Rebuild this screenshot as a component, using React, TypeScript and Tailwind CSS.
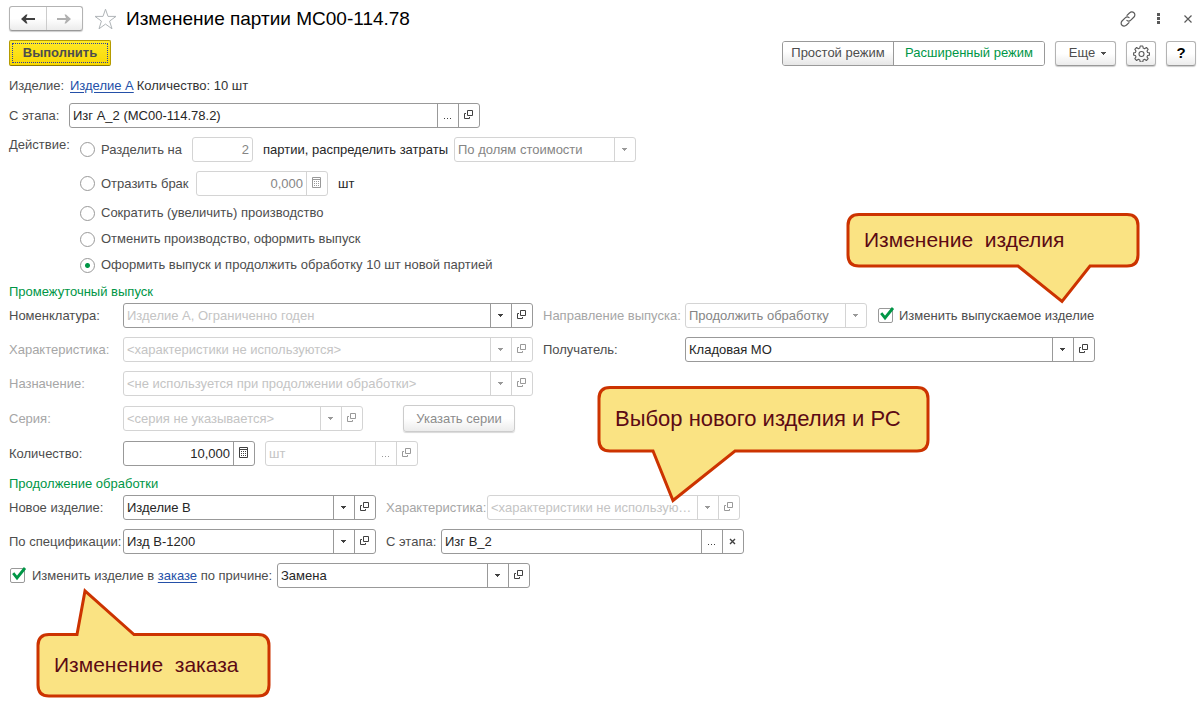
import { useState } from 'react';
import type { ReactNode } from 'react';
import clsx from 'clsx';

type IconName = 'arrow' | 'open' | 'calc' | 'dots' | 'clear';

const iconLabels: Record<IconName, string> = {
  arrow: 'Выбрать из списка',
  open: 'Открыть',
  calc: 'Калькулятор',
  dots: 'Выбрать',
  clear: 'Очистить',
};

function FieldIcon({ name }: { name: IconName }) {
  if (name === 'arrow') {
    return (
      <svg width="5" height="3" viewBox="0 0 5 3" fill="currentColor" shapeRendering="crispEdges">
        <path d="M0 0h5v1H0zM1 1h3v1H1zM2 2h1v1H2z" />
      </svg>
    );
  }
  if (name === 'open') {
    return (
      <svg width="9" height="11" viewBox="0 0 9 11" fill="none" stroke="currentColor">
        <path d="M3.5 .5h5v5h-5zM2 3.5H.5v5h5V7" />
      </svg>
    );
  }
  if (name === 'calc') {
    return (
      <svg width="9" height="13" viewBox="0 0 9 13" fill="none" stroke="currentColor">
        <path d="M.5 .5h8v10h-8zM.5 2.5h8" />
        <path d="M2 4.5h5M2 6.5h5M2 8.5h5" strokeDasharray="1 1" />
      </svg>
    );
  }
  if (name === 'dots') {
    return (
      <svg width="7" height="9" viewBox="0 0 7 9" fill="currentColor" shapeRendering="crispEdges">
        <path d="M0 7h1v1H0zM3 7h1v1H3zM6 7h1v1H6z" />
      </svg>
    );
  }
  return (
    <svg width="7" height="8" viewBox="0 0 7 8" fill="none" stroke="currentColor" strokeWidth="1.4">
      <path d="M1 1l5 5M6 1L1 6" />
    </svg>
  );
}

interface FieldProps {
  id: string;
  width: string;
  value?: string;
  placeholder?: string;
  icons?: IconName[];
  disabled?: boolean;
  right?: boolean;
  label?: string;
}

function Field({ id, width, value, placeholder, icons = [], disabled, right, label }: FieldProps) {
  const border = disabled ? 'border-[#d4d4d4]' : 'border-[#999999]';
  return (
    <div className={clsx('flex h-[25px] min-w-0 overflow-hidden rounded-[3px] border bg-white', border, width)}>
      <input
        id={id}
        type="text"
        aria-label={label}
        defaultValue={value}
        placeholder={placeholder}
        disabled={disabled}
        className={clsx(
          'h-full min-w-0 flex-1 px-[3px] text-ellipsis outline-none placeholder:text-[#c4c4c4]',
          right && 'text-right',
          disabled ? 'text-[#858585]' : 'text-[#262626]'
        )}
      />
      {icons.map((name) => (
        <button
          key={name}
          type="button"
          aria-label={iconLabels[name]}
          disabled={disabled}
          className={clsx(
            'flex w-[21px] shrink-0 items-center justify-center border-l pr-px',
            border,
            disabled ? 'text-[#999999]' : 'text-[#404040]'
          )}
        >
          <FieldIcon name={name} />
        </button>
      ))}
    </div>
  );
}

function DisabledSelect({ id, option, label }: { id: string; option: string; label?: string }) {
  return (
    <div className="relative flex h-[25px] w-[182px] min-w-0 rounded-[3px] border border-[#d4d4d4]">
      <select
        id={id}
        aria-label={label}
        disabled
        className="h-full w-full appearance-none px-[3px] text-[#858585] opacity-100"
      >
        <option>{option}</option>
      </select>
      <span className="pointer-events-none absolute inset-y-0 right-0 flex w-[21px] items-center justify-center border-l border-[#d4d4d4] pr-px text-[#999999]">
        <FieldIcon name="arrow" />
      </span>
    </div>
  );
}

function Label({ htmlFor, width, muted, children }: { htmlFor: string; width?: string; muted?: boolean; children: ReactNode }) {
  return (
    <label
      htmlFor={htmlFor}
      className={clsx('shrink-0 whitespace-nowrap', width, muted ? 'text-[#a6a6a6]' : 'text-[#4d4d4d]')}
    >
      {children}
    </label>
  );
}

function CheckBox({ id, label }: { id: string; label?: string }) {
  const [checked, setChecked] = useState(true);
  return (
    <span className="relative size-[15px] shrink-0">
      <input
        id={id}
        type="checkbox"
        aria-label={label}
        checked={checked}
        onChange={(e) => setChecked(e.target.checked)}
        className="block size-[15px] appearance-none rounded-[2px] border border-[#999999] bg-white"
      />
      {checked && (
        <svg
          className="pointer-events-none absolute top-[-1px] left-0"
          width="17"
          height="16"
          viewBox="0 0 17 16"
          fill="none"
          stroke="#009646"
          strokeWidth="2.8"
        >
          <path d="M3.2 6.2L7 10.900L15 1" />
        </svg>
      )}
    </span>
  );
}

const actions = [
  { id: 'split', text: 'Разделить на', width: 'w-[102px]' },
  { id: 'defect', text: 'Отразить брак', width: 'w-[106px]' },
  { id: 'resize', text: 'Сократить (увеличить) производство' },
  { id: 'cancel', text: 'Отменить производство, оформить выпуск' },
  { id: 'continue', text: 'Оформить выпуск и продолжить обработку 10 шт новой партией' },
];

function Callout({ className, width, height, path, textClass, children }: {
  className: string;
  width: number;
  height: number;
  path: string;
  textClass: string;
  children: string;
}) {
  return (
    <div className={clsx('pointer-events-none absolute', className)}>
      <svg width={width} height={height} viewBox={`0 0 ${width} ${height}`} fill="#fae383" stroke="#cc3300" strokeWidth="3">
        <path d={path} />
      </svg>
      <p className={clsx('absolute left-[18px] whitespace-pre leading-7 text-[#5c0a14]', textClass)}>
        {children}
      </p>
    </div>
  );
}

const raised = 'border border-[#b3b3b3] border-b-[#999999] bg-linear-to-b from-white from-50% to-[#ececec] rounded-[3px] shadow-[0_1px_1px_#cccccc]';

export default function App() {
  const [action, setAction] = useState('continue');
  const [mode, setMode] = useState('extended');

  const radio = (index: number) => {
    const { id, text, width } = actions[index];
    return (
      <label className={clsx('flex shrink-0 items-center gap-[6px] whitespace-nowrap', width)}>
        <input
          type="radio"
          name="action"
          checked={action === id}
          onChange={() => setAction(id)}
          className="size-[15px] shrink-0 appearance-none rounded-full border border-[#999999] bg-white checked:bg-[radial-gradient(circle,#009646_2px,transparent_3px)]"
        />
        {text}
      </label>
    );
  };

  return (
    <div className="relative min-h-screen bg-white px-[9px] pt-[6px] pb-[117px] font-['Liberation_Sans',Arial,sans-serif] text-[13px] leading-4 text-[#4d4d4d]">
      <header className="flex h-[25px] items-center">
        <div className={clsx('flex h-[25px] w-[74px] shrink-0', raised)}>
          <button type="button" aria-label="Назад" className="flex flex-1 items-center justify-center border-r border-[#cccccc] text-[#404040]">
            <svg width="14" height="10" viewBox="0 0 14 10" fill="currentColor">
              <path d="M0 5L5 .5h1.500L5 4h9v2H5l1.500 3.500H5z" />
            </svg>
          </button>
          <button type="button" aria-label="Вперед" className="flex flex-1 items-center justify-center text-[#b0b0b0]">
            <svg width="14" height="10" viewBox="0 0 14 10" fill="currentColor">
              <path d="M14 5L9 .5H7.500L9 4H0v2h9L7.500 9.500H9z" />
            </svg>
          </button>
        </div>
        <button type="button" aria-label="В избранное" className="ml-[11px] text-[#b0b5b8]">
          <svg width="23" height="22" viewBox="0 0 23 22" fill="none" stroke="currentColor">
            <path d="M11.5 1.2L14 8.4h8l-6.400 4.700 2.400 7.700-6.500-4.700L5 20.800l2.400-7.700L1 8.400h8z" />
          </svg>
        </button>
        <h1 className="ml-[9px] min-w-0 flex-1 truncate text-[19px] leading-6 text-black">Изменение партии МС00-114.78</h1>
        <div className="flex shrink-0 text-[#595959]">
          <button type="button" aria-label="Получить ссылку" className="flex w-[30px] justify-center">
            <svg width="16" height="16" viewBox="0 0 16 16" fill="none" stroke="currentColor" strokeWidth="1.2" strokeLinecap="round">
              <path d="M7 4.400L9.700 1.800a2.900 2.900 0 0 1 4.300 4.200L10.800 9.200a2.900 2.900 0 0 1-3.900.2" />
              <path d="M9 11.600L6.300 14.200A2.900 2.900 0 0 1 2 10L5.200 6.800a2.900 2.900 0 0 1 3.900-.2" />
            </svg>
          </button>
          <button type="button" aria-label="Меню" className="flex w-[30px] items-center justify-center">
            <svg width="3" height="11" viewBox="0 0 3 11" fill="currentColor">
              <path d="M0 0h3v3H0zM0 4h3v3H0zM0 8h3v3H0z" />
            </svg>
          </button>
          <button type="button" aria-label="Закрыть" className="-mr-[10px] flex w-[30px] items-center justify-center">
            <svg width="8" height="8" viewBox="0 0 8 8" fill="none" stroke="currentColor" strokeWidth="1.2">
              <path d="M.5 .5l7 7M7.500 .5l-7 7" />
            </svg>
          </button>
        </div>
      </header>

      <div className="mt-[9px] -mr-[3px] flex items-center justify-between gap-4">
        <button
          type="button"
          className="h-[26px] w-[102px] shrink-0 rounded-[2px] border border-[#b59b00] border-b-[#8f7b00] bg-linear-to-b from-[#ffe924] to-[#f9d800] p-[2px] font-bold"
        >
          <span className="flex h-full items-center justify-center border border-dotted border-[#2b3fa0]">Выполнить</span>
        </button>
        <div className="flex gap-[10px]">
          <div className="flex h-[25px] overflow-hidden rounded-[3px] border border-[#999999]">
            <button
              type="button"
              aria-pressed={mode === 'simple'}
              onClick={() => setMode('simple')}
              className={clsx('w-[110px]', mode === 'simple' ? 'bg-white text-[#009646]' : 'bg-linear-to-b from-white from-40% to-[#e6e6e6]')}
            >
              Простой режим
            </button>
            <button
              type="button"
              aria-pressed={mode === 'extended'}
              onClick={() => setMode('extended')}
              className={clsx('w-[151px] border-l border-[#999999]', mode === 'extended' ? 'bg-white text-[#009646]' : 'bg-linear-to-b from-white from-40% to-[#e6e6e6]')}
            >
              Расширенный режим
            </button>
          </div>
          <button type="button" className={clsx('flex h-[25px] w-[61px] items-center justify-center gap-[6px] pl-1', raised)}>
            Еще
            <FieldIcon name="arrow" />
          </button>
          <button type="button" aria-label="Настройки" className={clsx('flex h-[25px] w-[30px] items-center justify-center', raised)}>
            <svg width="17" height="17" viewBox="0 0 17 17" fill="none" stroke="#595959" strokeWidth="1.100" strokeLinejoin="round">
              <path d="M7.200 1h2.600l.4 2.100 1.400.6 1.800-1.200 1.800 1.800-1.200 1.800.6 1.400 1.900.4v2.200l-1.900.4-.6 1.400 1.200 1.800-1.800 1.800-1.800-1.200-1.400.6-.4 2.100H7.200l-.4-2.100-1.400-.6-1.800 1.200-1.800-1.800L3 11.900l-.6-1.400L.6 10.100V7.900l1.800-.4L3 6.100 1.800 4.300l1.800-1.800 1.800 1.200 1.400-.6z" />
              <circle cx="8.500" cy="9" r="2.500" />
            </svg>
          </button>
          <button type="button" className={clsx('h-[25px] w-[30px] text-[15px] font-bold text-black', raised)}>?</button>
        </div>
      </div>

      <main>
        <p className="mt-[7px] flex h-[25px] items-center">
          <span className="w-[61px]">Изделие:</span>
          <a href="#product" className="text-[#2450a8] underline underline-offset-2">Изделие А</a>
          <span className="ml-[3px] text-[#333333]">Количество: 10 шт</span>
        </p>

        <div className="mt-[5px] flex items-center">
          <Label htmlFor="stage" width="w-[60px]">С этапа:</Label>
          <Field id="stage" width="w-[411px]" value="Изг А_2 (МС00-114.78.2)" icons={['dots', 'open']} />
        </div>

        <fieldset className="mt-[9px] flex">
          <legend className="float-left w-[71px] shrink-0">Действие:</legend>
          <div className="min-w-0">
            <div className="flex h-[25px] items-center gap-[10px]">
              {radio(0)}
              <Field id="parts" label="Количество партий" width="w-[61px]" value="2" disabled right />
              <span className="w-[181px] whitespace-nowrap text-[#262626]">партии, распределить затраты</span>
              <DisabledSelect id="costs" label="Распределить затраты" option="По долям стоимости" />
            </div>
            <div className="mt-[9px] mb-1 flex h-[25px] items-center gap-[10px]">
              {radio(1)}
              <Field id="defect" label="Количество брака" width="w-[132px]" value="0,000" icons={['calc']} disabled right />
              <span className="text-[#262626]">шт</span>
            </div>
            <div className="flex h-[26px] items-center">{radio(2)}</div>
            <div className="flex h-[26px] items-center">{radio(3)}</div>
            <div className="flex h-[26px] items-center">{radio(4)}</div>
          </div>
        </fieldset>

        <section>
          <h2 className="flex h-[25px] items-center pt-[2px] text-[#009646]">Промежуточный выпуск</h2>
          <div className="flex gap-[10px]">
            <div className="flex min-w-0 flex-col gap-[9px]">
              <div className="flex items-center">
                <Label htmlFor="item" width="w-[114px]">Номенклатура:</Label>
                <Field id="item" width="w-[410px]" placeholder="Изделие А, Ограниченно годен" icons={['arrow', 'open']} />
              </div>
              <div className="flex items-center">
                <Label htmlFor="feature" width="w-[114px]" muted>Характеристика:</Label>
                <Field id="feature" width="w-[410px]" placeholder="<характеристики не используются>" icons={['arrow', 'open']} disabled />
              </div>
              <div className="flex items-center">
                <Label htmlFor="purpose" width="w-[114px]" muted>Назначение:</Label>
                <Field id="purpose" width="w-[410px]" placeholder="<не используется при продолжении обработки>" icons={['arrow', 'open']} disabled />
              </div>
            </div>
            <div className="flex min-w-0 flex-col gap-[9px]">
              <div className="flex items-center">
                <Label htmlFor="direction" width="w-[142px]" muted>Направление выпуска:</Label>
                <DisabledSelect id="direction" option="Продолжить обработку" />
                <div className="ml-[11px] flex items-center gap-[6px]">
                  <CheckBox id="change-output" />
                  <Label htmlFor="change-output">Изменить выпускаемое изделие</Label>
                </div>
              </div>
              <div className="flex items-center">
                <Label htmlFor="receiver" width="w-[142px]">Получатель:</Label>
                <Field id="receiver" width="w-[410px]" value="Кладовая МО" icons={['arrow', 'open']} />
              </div>
            </div>
          </div>
          <div className="mt-[9px] flex h-[27px] items-center">
            <Label htmlFor="series" width="w-[114px]" muted>Серия:</Label>
            <Field id="series" width="w-[240px]" placeholder="<серия не указывается>" icons={['arrow', 'open']} disabled />
            <button
              type="button"
              disabled
              className="ml-10 h-[27px] w-[112px] shrink-0 rounded-[3px] border border-[#cccccc] bg-linear-to-b from-white from-50% to-[#ececec] text-[#8c8c8c] shadow-[0_1px_1px_#d9d9d9]"
            >
              Указать серии
            </button>
          </div>
          <div className="mt-[9px] flex items-center">
            <Label htmlFor="quantity" width="w-[114px]">Количество:</Label>
            <Field id="quantity" width="w-[132px]" value="10,000" icons={['calc']} right />
            <div className="ml-[10px] flex min-w-0">
              <Field id="unit" label="Единица измерения" width="w-[153px]" placeholder="шт" icons={['dots', 'open']} disabled />
            </div>
          </div>
        </section>

        <section>
          <h2 className="mt-1 flex h-[25px] items-center pt-[2px] text-[#009646]">Продолжение обработки</h2>
          <div className="flex flex-col gap-[9px]">
            <div className="flex items-center">
              <Label htmlFor="new-item" width="w-[114px]">Новое изделие:</Label>
              <Field id="new-item" width="w-[253px]" value="Изделие В" icons={['arrow', 'open']} />
              <Label htmlFor="new-feature" width="ml-[10px] w-[101px]" muted>Характеристика:</Label>
              <Field id="new-feature" width="w-[253px]" placeholder="<характеристики не используются>" icons={['arrow', 'open']} disabled />
            </div>
            <div className="flex items-center">
              <Label htmlFor="spec" width="w-[114px]">По спецификации:</Label>
              <Field id="spec" width="w-[253px]" value="Изд В-1200" icons={['arrow', 'open']} />
              <Label htmlFor="new-stage" width="ml-[10px] w-[55px]">С этапа:</Label>
              <Field id="new-stage" width="w-[303px]" value="Изг В_2" icons={['dots', 'clear']} />
            </div>
            <div className="flex items-center">
              <div className="flex w-[268px] shrink-0 items-center gap-[7px] whitespace-nowrap pl-px">
                <CheckBox id="change-order" label="Изменить изделие в заказе" />
                <span>
                  <label htmlFor="change-order">Изменить изделие в </label>
                  <a href="#order" className="text-[#2450a8] underline underline-offset-2">заказе</a>
                  <label htmlFor="reason"> по причине:</label>
                </span>
              </div>
              <Field id="reason" width="w-[253px]" value="Замена" icons={['arrow', 'open']} />
            </div>
          </div>
        </section>
      </main>

      <Callout
        className="top-[212px] left-[846px]"
        width={294}
        height={92}
        path="M13 2.500H281q11 0 11 11V43q0 11-11 11H244L216 89.500L172 54H13q-11 0-11-11V13.500q0-11 11-11z"
        textClass="top-[14px] text-[21px]"
      >
        {'Изменение  изделия'}
      </Callout>
      <Callout
        className="top-[385px] left-[597px]"
        width={334}
        height={119}
        path="M13 2.500H320q11 0 11 11V55q0 11-11 11H138L76 115.500L56 66H13q-11 0-11-11V13.500q0-11 11-11z"
        textClass="top-5 text-[22px]"
      >
        Выбор нового изделия и РС
      </Callout>
      <Callout
        className="top-[587px] left-[36px]"
        width={237}
        height={113}
        path="M13 47.500H41L49 4L98 47.500H222q11 0 11 11V98q0 11-11 11H13q-11 0-11-11V58.500q0-11 11-11z"
        textClass="top-16 text-[21px]"
      >
        {'Изменение  заказа'}
      </Callout>
    </div>
  );
}
